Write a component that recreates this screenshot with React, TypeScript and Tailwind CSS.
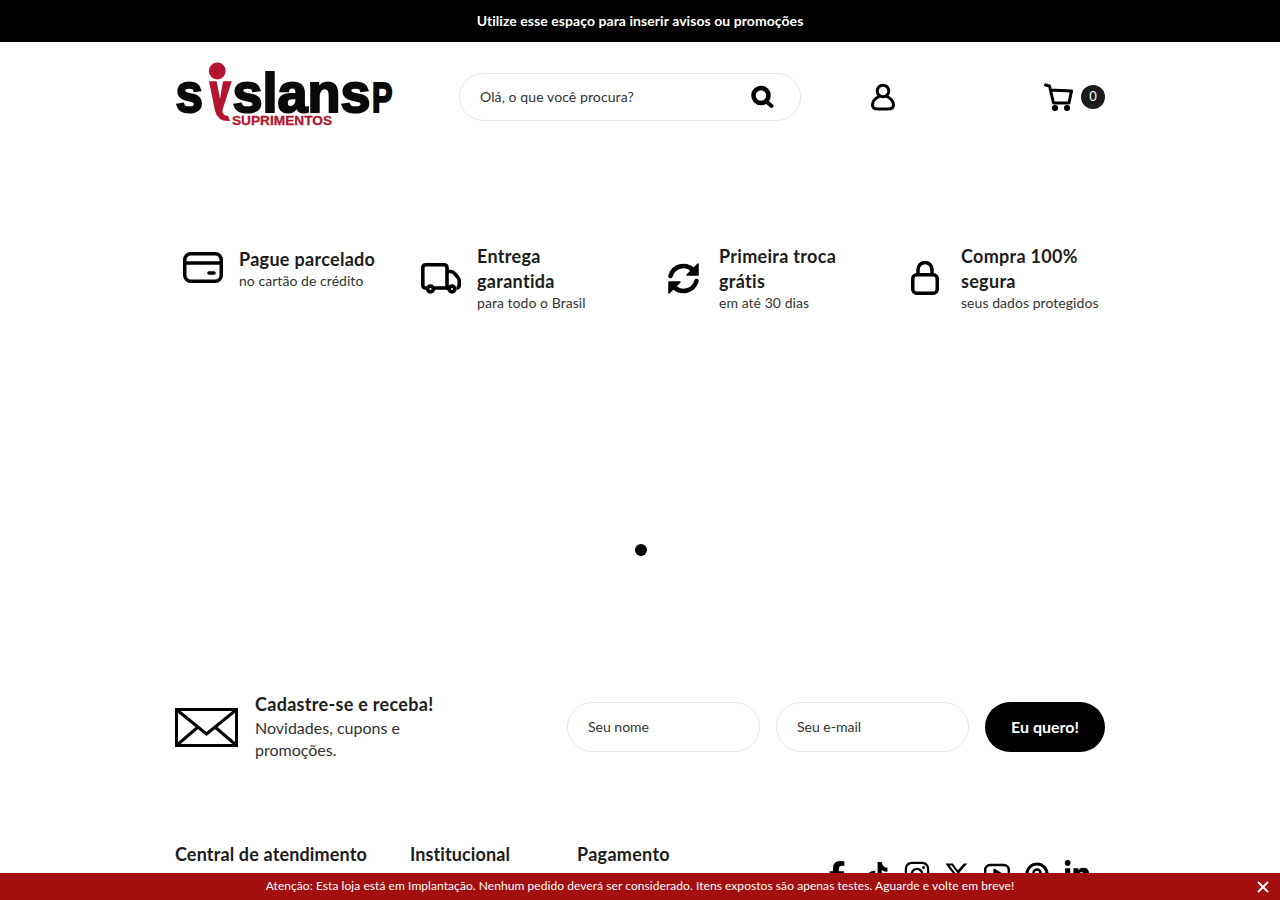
import React from "react";
import { FaFacebookF, FaTiktok, FaInstagram, FaXTwitter, FaLinkedinIn } from "react-icons/fa6";

const Logo = () => (
  <svg width="220" height="66" viewBox="0 0 220 66" className="block overflow-visible">
    <g fontFamily="'Liberation Sans', Arial, sans-serif" fontWeight="700">
      <text x="0.5" y="47.5" fontSize="56" fill="#0a0a0a" stroke="#0a0a0a" strokeWidth="2.2" textLength="27.5" lengthAdjust="spacingAndGlyphs">s</text>
      <text x="57.5" y="47.5" fontSize="56" fill="#0a0a0a" stroke="#0a0a0a" strokeWidth="2.2" textLength="138" lengthAdjust="spacingAndGlyphs">slans</text>
      <text x="197" y="47.5" fontSize="42" fill="#0a0a0a" stroke="#0a0a0a" strokeWidth="2" textLength="20.5" lengthAdjust="spacingAndGlyphs">P</text>
      <text x="57" y="61" fontSize="13" fill="#b3152f" stroke="#b3152f" strokeWidth="0.3" textLength="100" lengthAdjust="spacingAndGlyphs">SUPRIMENTOS</text>
    </g>
    <circle cx="42.3" cy="7" r="8.4" fill="#b3152f" />
    <path d="M34 17.3 L41.7 17.3 L45 35 L48 17.3 L56.7 17.3 L47.5 46 Q46.5 51 53 52 L55 57 Q43 58 40 47 Z" fill="#b3152f" />
  </svg>
);

const Feature = ({ w, icon, title, sub }: { w: string; icon: React.ReactNode; title: string[]; sub: string }) => (
  <div className={`${w} flex items-center shrink-0`}>
    <div className="w-[56px] mr-2 flex justify-center shrink-0">{icon}</div>
    <div className="flex flex-col">
      <div className="text-[18px] leading-[25px] font-bold tracking-[0.3px] text-[#1c1c1c]">
        {title.map((t) => (
          <div key={t}>{t}</div>
        ))}
      </div>
      <div className="text-[14px] leading-[18px] tracking-[0.05px] text-[#333]">{sub}</div>
    </div>
  </div>
);

export default function App() {
  return (
    <div className="h-[900px] overflow-hidden bg-white font-['Lato','Liberation_Sans',sans-serif] text-[#1c1c1c]">
      <div className="h-[42px] pb-[2px] bg-black flex items-center justify-center text-white text-[14px] font-bold tracking-[0.06px]">
        Utilize esse espaço para inserir avisos ou promoções
      </div>

      <div className="w-[930px] mx-auto">
        <header className="flex items-center h-[48px] mt-[31px]">
          <div className="w-[284px] shrink-0"><Logo /></div>
          <div className="w-[342px] h-[48px] rounded-[24px] border border-[#e8e8e8] flex items-center justify-between pl-5 pr-[26px] shrink-0">
            <span className="text-[14px] tracking-[0.1px] text-[#333] pb-[2px]">Olá, o que você procura?</span>
            <svg width="24" height="24" viewBox="0 0 24 24" fill="none" stroke="#000" strokeLinecap="round" className="-ml-[1px]">
              <circle cx="11" cy="10.5" r="7.5" strokeWidth="4.6" />
              <path d="M17 17 L21.5 21" strokeWidth="3.8" />
            </svg>
          </div>
          <div className="ml-[70px] w-[24px] shrink-0">
            <svg width="24" height="28" viewBox="0 0 24 28" fill="none" stroke="#000" strokeWidth="3" className="block">
              <circle cx="12" cy="8" r="5.8" />
              <path d="M8 13.5 C3 16 1.5 19 1.5 22 C1.5 25 4 26 7 26 L17 26 C20 26 22.5 25 22.5 22 C22.5 19 21 16 16 13.5" strokeLinecap="round" />
            </svg>
          </div>
          <div className="ml-auto flex items-center gap-2">
            <svg width="29" height="28" viewBox="0 0 29 28" fill="none" stroke="#000" strokeWidth="3" strokeLinecap="round" strokeLinejoin="round" className="block">
              <path d="M1.5 2 L5.5 3 L9.5 20 L25 20 L27.5 8 L6.5 7" />
              <circle cx="11" cy="25" r="1.6" fill="#000" />
              <circle cx="23" cy="25" r="1.6" fill="#000" />
            </svg>
            <div className="w-6 h-6 rounded-full bg-[#1c1c1c] text-white text-[13px] flex items-center justify-center">0</div>
          </div>
        </header>

        <section className="flex mt-[127px] h-[60px] items-center">
          <Feature
            w="w-[238px] mb-[20px]"
            title={["Pague parcelado"]}
            sub="no cartão de crédito"
            icon={
              <svg width="40" height="32" viewBox="0 0 40 32" fill="none" stroke="#000" strokeWidth="3.5" className="block">
                <rect x="1.75" y="1.75" width="36.5" height="27.5" rx="6" />
                <path d="M2 11 H38" />
                <path d="M26 21 H31" strokeWidth="3.6" strokeLinecap="round" />
              </svg>
            }
          />
          <Feature
            w="w-[242px]"
            title={["Entrega", "garantida"]}
            sub="para todo o Brasil"
            icon={
              <svg width="40" height="31" viewBox="0 0 40 31" fill="none" stroke="#000" strokeWidth="3.6" strokeLinejoin="round" className="block">
                <path d="M6 25 H5 Q1.8 25 1.8 22 V5 Q1.8 1.8 5 1.8 H23 Q26 1.8 26 5 V25 H13" />
                <path d="M26 8.5 H30 Q32 8.5 34 11 L37 14.5 Q38.2 16 38.2 18 V22 Q38.2 25 35.5 25 M27 25 H25" />
                <circle cx="9.5" cy="26" r="2.9" />
                <circle cx="31" cy="26" r="2.9" />
              </svg>
            }
          />
          <Feature
            w="w-[242px]"
            title={["Primeira troca", "grátis"]}
            sub="em até 30 dias"
            icon={
              <svg width="33" height="33" viewBox="0 0 33 33" fill="none" stroke="#000" strokeWidth="4.6" strokeLinecap="round" className="block">
                <path d="M3.5 14 A13.5 13.5 0 0 1 26 8" />
                <path d="M31 2 L31 13 L20 13 Z" fill="#000" strokeWidth="1.5" strokeLinejoin="round" />
                <path d="M29.5 19 A13.5 13.5 0 0 1 7 25" />
                <path d="M2 31 L2 20 L13 20 Z" fill="#000" strokeWidth="1.5" strokeLinejoin="round" />
              </svg>
            }
          />
          <Feature
            w="w-[208px]"
            title={["Compra 100%", "segura"]}
            sub="seus dados protegidos"
            icon={
              <svg width="28" height="34" viewBox="0 0 28 34" fill="none" stroke="#000" strokeWidth="3.5" className="block">
                <rect x="1.75" y="13.75" width="24.5" height="18.5" rx="4" />
                <path d="M7 13 V8.5 A7 7 0 0 1 21 8.5 V13" />
              </svg>
            }
          />
        </section>

        <div className="flex justify-center mt-[217px] pl-[2px] pt-[19px]">
          <div className="w-3 h-3 rounded-full bg-black" />
        </div>

        <section className="flex items-center mt-[141px] h-[60px]">
          <svg width="63" height="39" viewBox="0 0 63 39" fill="none" stroke="#000" strokeWidth="3" className="block shrink-0">
            <rect x="1.5" y="1.5" width="60" height="36" />
            <path d="M2 2 L31.5 26 L61 2 M2 37 L23 19 M61 37 L40 19" />
          </svg>
          <div className="ml-[17px] w-[200px] shrink-0">
            <div className="text-[18px] leading-[22px] font-bold tracking-[0.3px] text-[#1c1c1c]">Cadastre-se e receba!</div>
            <div className="text-[16px] leading-[22px] mt-[2px] text-[#333]">Novidades, cupons e promoções.</div>
          </div>
          <div className="ml-auto flex items-center gap-4">
            <div className="w-[193px] h-[50px] rounded-[25px] border border-[#e8e8e8] flex items-center pl-[20px] pb-[1px] text-[14px] text-[#333]">Seu nome</div>
            <div className="w-[193px] h-[50px] rounded-[25px] border border-[#e8e8e8] flex items-center pl-[20px] pb-[1px] text-[14px] text-[#333]">Seu e-mail</div>
            <div className="w-[120px] h-[50px] rounded-[25px] bg-black text-white font-bold text-[16px] flex items-center justify-center">Eu quero!</div>
          </div>
        </section>

        <footer className="flex mt-[85px]">
          <div className="w-[235px] text-[18px] leading-[25px] font-bold tracking-[0.15px]">Central de atendimento</div>
          <div className="w-[167px] text-[18px] leading-[25px] font-bold tracking-[0.1px]">Institucional</div>
          <div className="text-[18px] leading-[25px] font-bold tracking-[0.3px]">Pagamento</div>
          <div className="ml-auto mr-[8px] mt-[18px] flex items-center text-black">
            <span className="w-[40px] flex justify-center"><FaFacebookF size={26} /></span>
            <span className="w-[40px] flex justify-center"><FaTiktok size={24} /></span>
            <span className="w-[40px] flex justify-center"><FaInstagram size={28} /></span>
            <span className="w-[40px] flex justify-center"><FaXTwitter size={26} /></span>
            <span className="w-[40px] flex justify-center">
              <svg width="26" height="26" viewBox="0 0 26 26" fill="none" stroke="#000" strokeWidth="2.4" strokeLinejoin="round" className="block">
                <rect x="1.2" y="4" width="23.6" height="18" rx="5" />
                <path d="M10.5 9 L17 13 L10.5 17 Z" />
              </svg>
            </span>
            <span className="w-[40px] flex justify-center">
              <svg width="24" height="26" viewBox="0 0 24 26" fill="none" stroke="#000" strokeWidth="3" className="block">
                <circle cx="12" cy="13" r="10" />
                <circle cx="12" cy="12" r="3.5" strokeWidth="2.5" />
              </svg>
            </span>
            <span className="w-[40px] flex justify-center"><FaLinkedinIn size={28} /></span>
          </div>
        </footer>
      </div>

      <div className="fixed left-0 right-0 bottom-0 h-[27px] bg-[#a30f0f] text-white text-[12px] tracking-[0.06px] pb-[1px] flex items-center justify-center">
        Atenção: Esta loja está em Implantação. Nenhum pedido deverá ser considerado. Itens expostos são apenas testes. Aguarde e volte em breve!
        <svg width="12" height="12" viewBox="0 0 12 12" stroke="#fff" strokeWidth="2" className="absolute right-[11px] top-[8px]">
          <path d="M1 1 L11 11 M11 1 L1 11" />
        </svg>
      </div>
    </div>
  );
}
